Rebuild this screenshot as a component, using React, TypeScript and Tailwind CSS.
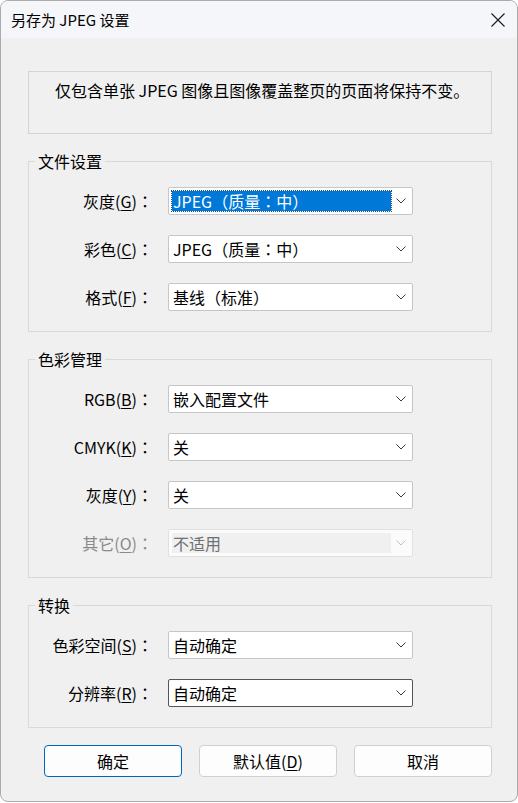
import React from 'react';

type Row = {
  label: string;
  keyChar: string;
  value: string;
  selected?: boolean;
  disabled?: boolean;
  focused?: boolean;
};

// full-width colon centred in its cell, as the dialog's font draws it
const Colon = () => <span className="font-['Noto_Sans_CJK_TC',sans-serif]">：</span>;

const withColons = (text: string) =>
  text.split('：').flatMap((part, i) => (i === 0 ? [part] : [<Colon key={i} />, part]));

const Chevron = ({ disabled }: { disabled?: boolean }) => (
  <svg width="10" height="6" viewBox="0 0 10 6" className="shrink-0">
    <path
      d="M0.5 0.5 L5 5 L9.5 0.5"
      fill="none"
      stroke={disabled ? '#c4c4c4' : '#3a3a3a'}
      strokeWidth="1"
    />
  </svg>
);

const Combo = ({ value, selected, disabled, focused }: Row) => (
  <div
    className={`flex items-center w-[245px] h-[28px] border rounded-[2px] ${
      disabled
        ? 'border-[#e0e0e0] bg-[#fbfbfb]'
        : focused
        ? 'border-[#555555] bg-white'
        : 'border-[#c6c6c6] bg-white'
    }`}
  >
    <div className="flex-1 h-full p-[3px] pr-0">
      <div
        className={`h-full w-[219px] flex items-center px-[1px] whitespace-nowrap ${
          selected
            ? 'bg-[#0078d7] text-white outline outline-1 outline-dotted outline-[#2a4f7a]'
            : disabled
            ? 'bg-[#f0f0f0] text-[#707070]'
            : 'text-black'
        }`}
      >
        {withColons(value)}
      </div>
    </div>
    <div className="w-[23px] flex justify-center pr-[2px]">
      <Chevron disabled={disabled} />
    </div>
  </div>
);

const FieldRow = (row: Row) => {
  const [before] = row.label.split(`(${row.keyChar})`);
  return (
    <div className="flex items-center h-[28px]">
      <div
        className={`w-[124px] text-right whitespace-nowrap ${
          row.disabled ? 'text-[#8a8a8a]' : 'text-black'
        }`}
      >
        {before}(<span className="underline underline-offset-2">{row.keyChar}</span>)<Colon />
      </div>
      <div className="ml-[15px]">
        <Combo {...row} />
      </div>
    </div>
  );
};

const Group = ({ title, rows }: { title: string; rows: Row[] }) => (
  <fieldset className="border border-[#d9d9d9] pt-[16px] pb-[20px] mt-[17px]">
    <legend className="ml-[6px] px-[3px] leading-[20px] text-black">{title}</legend>
    <div className="flex flex-col gap-[20px]">
      {rows.map((r) => (
        <FieldRow key={r.label} {...r} />
      ))}
    </div>
  </fieldset>
);

const Button = ({ children, primary }: { children: React.ReactNode; primary?: boolean }) => (
  <button
    className={`w-[138px] h-[32px] rounded-[4px] border bg-[#fdfdfd] text-black ${
      primary ? 'border-[#0067c0]' : 'border-[#d0d0d0]'
    }`}
  >
    {children}
  </button>
);

export default function App() {
  return (
    <div className="w-[518px] h-[803px] bg-white font-['Noto_Sans_CJK_SC','Microsoft_YaHei',sans-serif] text-[16px] leading-[20px]">
      <div className="w-[518px] h-[802px] rounded-[8px] border border-[#ababab] bg-[#f0f0f0] overflow-hidden flex flex-col">
        <div className="h-[37px] bg-[#f4f6f9] flex items-center justify-between pl-[10px] pr-[11px]">
          <span className="text-[15px] text-black">另存为 JPEG 设置</span>
          <svg width="16" height="16" viewBox="0 0 16 16">
            <path d="M1.5 1.5 L14.5 14.5 M14.5 1.5 L1.5 14.5" stroke="#1a1a1a" strokeWidth="1.1" />
          </svg>
        </div>
        <div className="pl-[27px] pr-[25px]">
          <div className="mt-[33px] h-[63px] border border-[#d4d4d4] pl-[26px] pt-[8px] text-black">
            仅包含单张 JPEG 图像且图像覆盖整页的页面将保持不变。
          </div>
          <Group
            title="文件设置"
            rows={[
              { label: '灰度(G)：', keyChar: 'G', value: 'JPEG（质量：中）', selected: true },
              { label: '彩色(C)：', keyChar: 'C', value: 'JPEG（质量：中）' },
              { label: '格式(F)：', keyChar: 'F', value: '基线（标准）' },
            ]}
          />
          <Group
            title="色彩管理"
            rows={[
              { label: 'RGB(B)：', keyChar: 'B', value: '嵌入配置文件' },
              { label: 'CMYK(K)：', keyChar: 'K', value: '关' },
              { label: '灰度(Y)：', keyChar: 'Y', value: '关' },
              { label: '其它(O)：', keyChar: 'O', value: '不适用', disabled: true },
            ]}
          />
          <Group
            title="转换"
            rows={[
              { label: '色彩空间(S)：', keyChar: 'S', value: '自动确定' },
              { label: '分辨率(R)：', keyChar: 'R', value: '自动确定', focused: true },
            ]}
          />
          <div className="mt-[17px] flex justify-end gap-[17px]">
            <Button primary>确定</Button>
            <Button>
              默认值(<span className="underline underline-offset-2">D</span>)
            </Button>
            <Button>取消</Button>
          </div>
        </div>
      </div>
    </div>
  );
}
